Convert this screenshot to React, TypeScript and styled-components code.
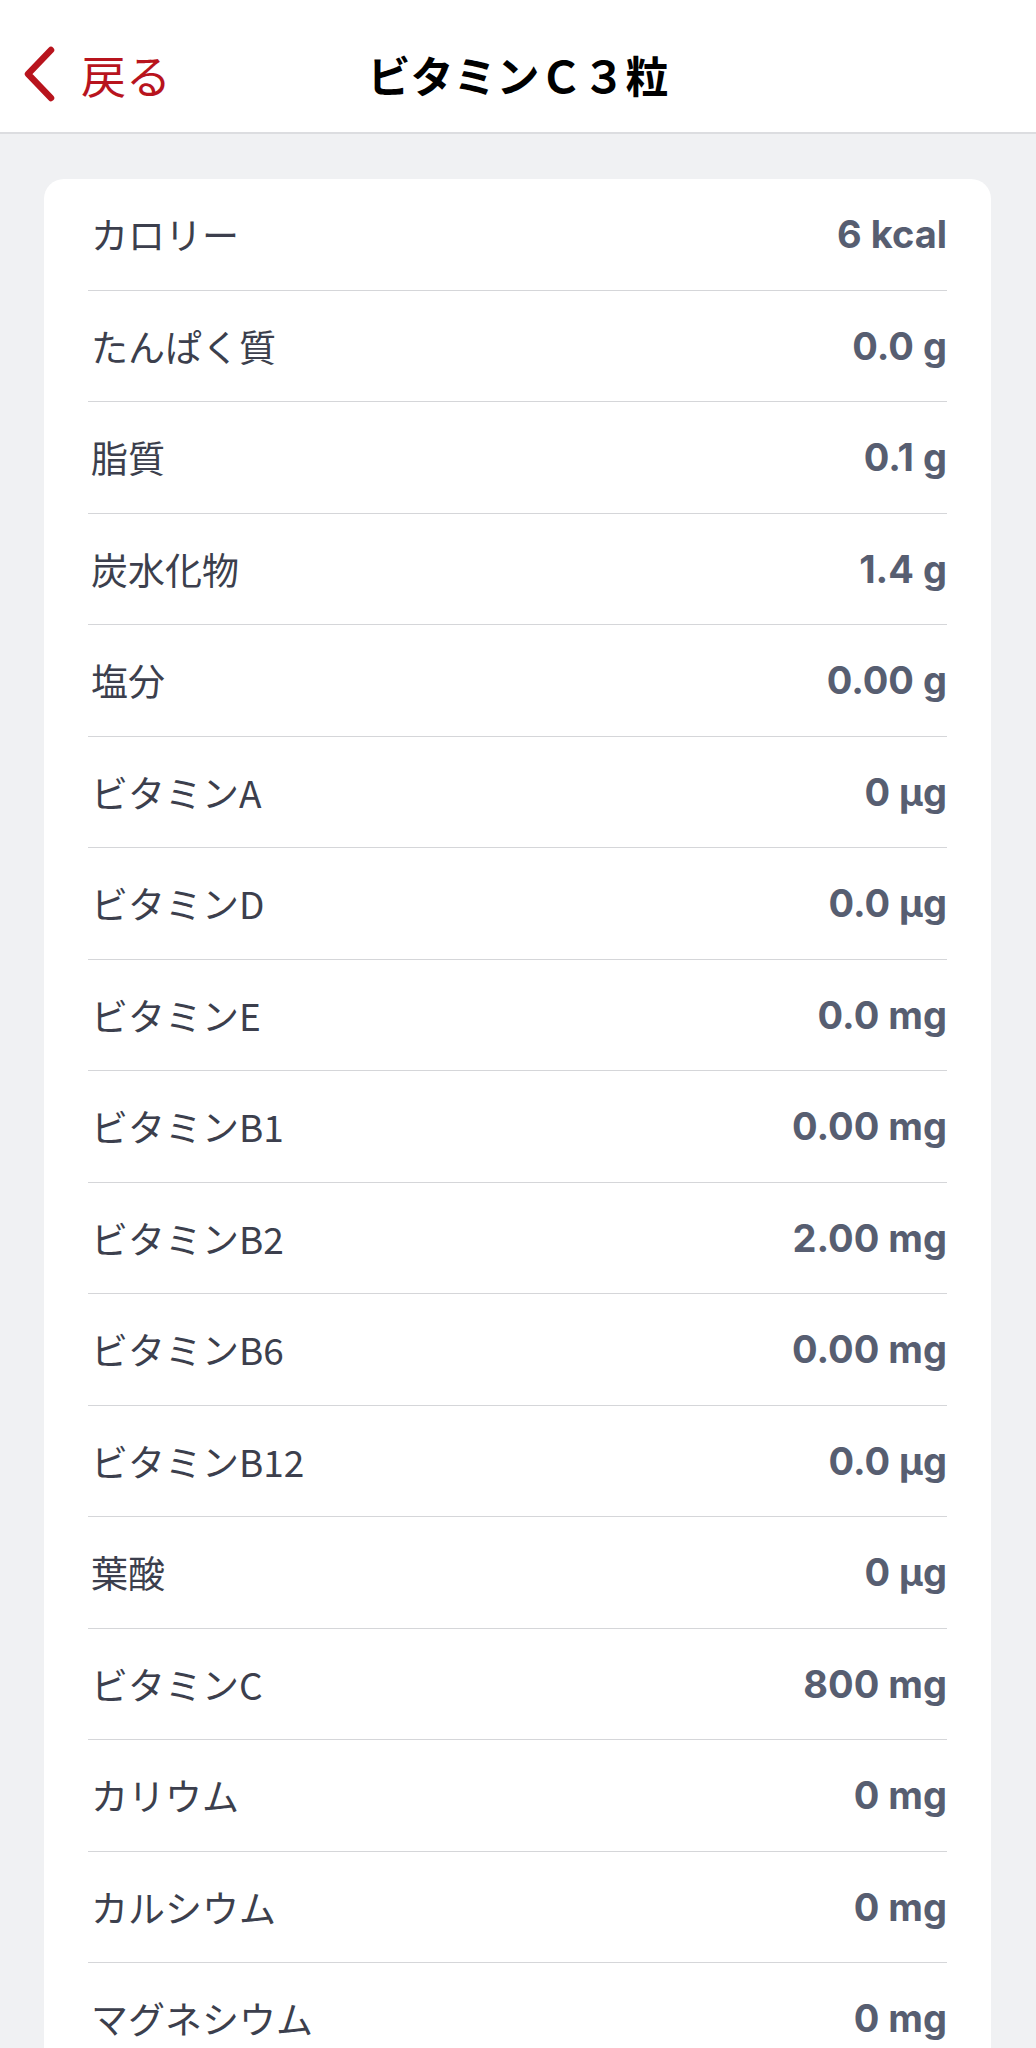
import React from "react";
import styled, { createGlobalStyle } from "styled-components";

const GlobalStyle = createGlobalStyle`
  html, body {
    margin: 0;
    padding: 0;
    background: #f0f1f3;
  }
  body {
    font-family: "Noto Sans CJK JP", "Noto Sans", sans-serif;
  }
`;

const Page = styled.div`
  min-height: 2048px;
  background: #f0f1f3;
`;

const Header = styled.header`
  position: relative;
  box-sizing: border-box;
  height: 134px;
  padding-top: 16px;
  background: #ffffff;
  border-bottom: 2px solid #dcdde0;
  display: flex;
  align-items: center;
  justify-content: center;
`;

const BackButton = styled.button`
  position: absolute;
  left: 23px;
  top: 16px;
  bottom: 0;
  display: flex;
  align-items: center;
  gap: 26px;
  padding: 0;
  border: none;
  background: transparent;
  color: #b8141d;
  font-family: "Noto Sans CJK JP", sans-serif;
  font-size: 45px;
  font-weight: 400;
  cursor: pointer;
`;

const Title = styled.h1`
  margin: 0;
  font-family: "Noto Sans CJK JP", sans-serif;
  font-size: 43px;
  font-weight: 700;
  color: #000000;
  letter-spacing: 0;
`;

const Main = styled.main`
  padding: 45px 45px 0 44px;
`;

const Card = styled.section`
  background: #ffffff;
  border-radius: 20px;
  padding: 0 44px;
`;

const Row = styled.div`
  height: 110.5px;
  display: flex;
  align-items: center;
  justify-content: space-between;
  border-bottom: 1px solid #d5d6d9;
  &:last-child {
    border-bottom: none;
  }
`;

const Label = styled.span`
  font-family: "Noto Sans CJK JP", sans-serif;
  font-size: 37px;
  font-weight: 400;
  color: #3c3f4d;
  padding-left: 3px;
`;

const Value = styled.span`
  font-family: Inter, "Liberation Sans", sans-serif;
  font-size: 38px;
  font-weight: 700;
  color: #575e71;
`;

const Chevron = () => (
  <svg width="32" height="56" viewBox="0 0 32 56" aria-hidden="true">
    <polyline
      points="28,4 5,28 28,52"
      fill="none"
      stroke="#b8141d"
      strokeWidth="6.5"
      strokeLinecap="round"
      strokeLinejoin="round"
    />
  </svg>
);

const nutrients: [string, string][] = [
  ["カロリー", "6 kcal"],
  ["たんぱく質", "0.0 g"],
  ["脂質", "0.1 g"],
  ["炭水化物", "1.4 g"],
  ["塩分", "0.00 g"],
  ["ビタミンA", "0 µg"],
  ["ビタミンD", "0.0 µg"],
  ["ビタミンE", "0.0 mg"],
  ["ビタミンB1", "0.00 mg"],
  ["ビタミンB2", "2.00 mg"],
  ["ビタミンB6", "0.00 mg"],
  ["ビタミンB12", "0.0 µg"],
  ["葉酸", "0 µg"],
  ["ビタミンC", "800 mg"],
  ["カリウム", "0 mg"],
  ["カルシウム", "0 mg"],
  ["マグネシウム", "0 mg"],
];

export default function App() {
  return (
    <Page>
      <GlobalStyle />
      <Header>
        <BackButton>
          <Chevron />
          <span>戻る</span>
        </BackButton>
        <Title>ビタミンＣ３粒</Title>
      </Header>
      <Main>
        <Card>
          {nutrients.map(([label, value]) => (
            <Row key={label}>
              <Label>{label}</Label>
              <Value>{value}</Value>
            </Row>
          ))}
        </Card>
      </Main>
    </Page>
  );
}
